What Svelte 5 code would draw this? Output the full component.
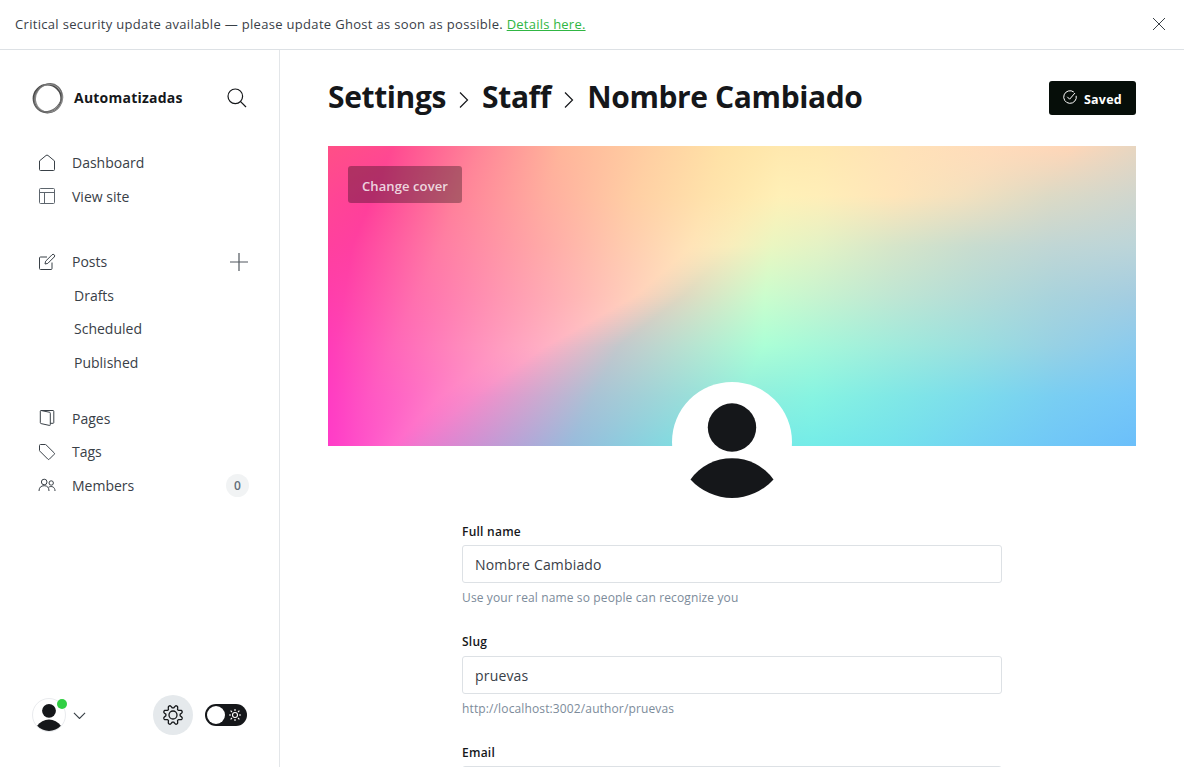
<script>
  // Colour field of the cover: each key line, 50px apart, lists [position %, colour] stops.
  const field = [
    [[0,'ff4f86'],[8,'ff4a90'],[19,'ff8698'],[29,'ffb69a'],[40,'ffcfa2'],[49,'ffe2a6'],[53,'ffe6aa'],[56,'ffe8ae'],[61,'ffe8b0'],[72,'ffe1b8'],[83,'ffdbbb'],[92,'ffd6b8'],[100,'e8d6c0']],
    [[0,'ff4694'],[5.5,'ff3f98'],[16,'ff8299'],[27,'ffae9f'],[38,'ffcfa4'],[47,'ffe2ab'],[52,'ffeab0'],[56,'fff0b7'],[61,'ffeeb8'],[70,'ffe5b9'],[78,'f4e1be'],[89,'dddac5'],[100,'d0d6ce']],
    [[0,'ff409e'],[3,'ff3fa1'],[14,'ff7da4'],[26,'ffa7a7'],[36,'ffc9ae'],[45,'ffe4b8'],[50,'f8eebc'],[55,'eaf6c1'],[61,'e3f2c5'],[70,'d6e5c9'],[80,'c8dccf'],[90,'c0d6d5'],[100,'bcd5d9']],
    [[0,'ff3dab'],[2,'ff41ab'],[11,'ff71ae'],[22,'ff99b2'],[31,'ffb8b6'],[38,'ffd1bb'],[44,'dfd9c1'],[54,'cbfdcd'],[60,'c8f4cf'],[70,'bfe6d3'],[80,'b4dcd7'],[90,'a9d3dc'],[100,'a4cde1']],
    [[0,'ff3cb8'],[1,'ff40b8'],[8,'ff66b9'],[16,'ff88bc'],[22,'ff9fc0'],[27,'ffb0c4'],[36,'c3c8cc'],[54,'abffd6'],[60,'a6f8d9'],[70,'a0ebdc'],[80,'9bdfdf'],[90,'97d1e4'],[100,'8bcbee']],
    [[0,'ff3cc2'],[1,'ff40c2'],[5,'ff56c3'],[10,'ff6bc5'],[14,'ff7fc7'],[18,'f78bca'],[33,'a9c3d5'],[51,'92eddc'],[60,'87f4e1'],[70,'80e8e6'],[80,'7cdcec'],[90,'79cef2'],[100,'76c7f8']],
    [[0,'ff3cc8'],[1,'ff40c8'],[3,'ff4bc9'],[5,'ff57ca'],[8,'ff68cc'],[11,'ee78ce'],[30,'98bbdc'],[46,'7be4e2'],[60,'74ece8'],[70,'73e2ec'],[80,'73d3f2'],[90,'70c7f7'],[100,'6bbffa']]
  ];
  const rgb = (h) => [0, 2, 4].map((i) => parseInt(h.slice(i, i + 2), 16));
  const mix = (a, b, t) => a + (b - a) * t;
  const STEP = 2;
  const bands = Array.from({ length: 300 / STEP }, (_, n) => {
    const y = n * STEP + STEP / 2;
    const k = Math.min(5, Math.floor(y / 50));
    const t = (y - k * 50) / 50;
    const stops = field[k].map(([pos, colour], i) => {
      const [nextPos, nextColour] = field[k + 1][i];
      const to = rgb(nextColour);
      const c = rgb(colour).map((v, j) => mix(v, to[j], t).toFixed(1));
      return `rgb(${c.join(' ')}) ${mix(pos, nextPos, t).toFixed(2)}%`;
    });
    return `linear-gradient(90deg, ${stops.join(', ')})`;
  });

  // Cog outline with eight teeth.
  const cog = 'M' + Array.from({ length: 120 }, (_, i) => {
    const a = (i * 3 * Math.PI) / 180;
    const wave = Math.max(-1, Math.min(1, -1.35 * Math.cos(8 * a)));
    const r = 8.4 + 1.3 * wave;
    return `${(12 + r * Math.cos(a)).toFixed(2)} ${(12 + r * Math.sin(a)).toFixed(2)}`;
  }).join('L') + 'Z';

  const fields = [
    { label: 'Full name', value: 'Nombre Cambiado', help: 'Use your real name so people can recognize you' },
    { label: 'Slug', value: 'pruevas', help: 'http://localhost:3002/author/pruevas' },
    { label: 'Email', value: '', help: '' }
  ];
</script>

{#snippet person()}
  <svg class="person" viewBox="0 0 112 112">
    <circle cx="56" cy="41.5" r="24.2" />
    <path d="M14.500 93.500A51 51 0 0 1 97.500 93.500A56 56 0 0 1 14.500 93.500Z" />
  </svg>
{/snippet}

{#snippet crumb()}
  <svg class="sep" viewBox="0 0 10 18"><path d="M1 1.500L8.500 9L1 16.500" /></svg>
{/snippet}

<div class="app">
  <div class="banner">
    <p>Critical security update available — please update Ghost as soon as possible. <a href="#details">Details here.</a></p>
    <svg class="close" viewBox="0 0 14 14"><path d="M1 1L13 13M13 1L1 13" /></svg>
  </div>
  <div class="body">
    <nav>
      <div class="head">
        <svg class="logo" viewBox="0 0 32 32">
          <circle cx="15.400" cy="16.600" r="13.900" stroke="#4a4a4a" stroke-width="1.800" />
          <ellipse cx="16.800" cy="15.600" rx="13.400" ry="14.200" stroke="#8a8a8a" stroke-width="1.500" transform="rotate(35 16 16)" />
          <ellipse cx="16.200" cy="15.700" rx="15" ry="12.700" stroke="#6a6a6a" stroke-width="1" transform="rotate(-48 16 16)" />
        </svg>
        <b>Automatizadas</b>
        <svg class="search" viewBox="0 0 20 20"><circle cx="8.300" cy="8.300" r="7.300" /><path d="M13.600 13.600L19 19" /></svg>
      </div>
      <ul>
        <li><svg class="ic" viewBox="0 0 18 18"><path d="M1.500 6.900L8 1.500a1.500 1.500 0 0 1 2 0L16.500 6.900V15.500a1 1 0 0 1-1 1H2.500a1 1 0 0 1-1-1Z" /></svg>Dashboard</li>
        <li><svg class="ic soft" viewBox="0 0 18 18"><rect x="1.500" y="1.500" width="15" height="15" rx="1" /><path d="M1.500 5.500H16.500M6.500 5.500V16.500" /></svg>View site</li>
      </ul>
      <ul class="posts">
        <li>
          <svg class="ic" viewBox="0 0 18 18"><path d="M9 4H2.500a1 1 0 0 0-1 1V15.500a1 1 0 0 0 1 1H13a1 1 0 0 0 1-1V9.500M7 11L7.600 8.200L14 1.800a1.500 1.500 0 0 1 2.200 2.200L9.800 10.400Z" /></svg>Posts
          <svg class="plus" viewBox="0 0 18 18"><path d="M9 0V18M0 9H18" /></svg>
        </li>
        <li class="sub">Drafts</li>
        <li class="sub">Scheduled</li>
        <li class="sub">Published</li>
      </ul>
      <ul class="rest">
        <li><svg class="ic" viewBox="0 0 18 18"><path d="M3 1.500H15a.8.8 0 0 1 .8.8V13.500a.8.8 0 0 1-.8.8H12.300M3 1.500L11.300 3.200a1 1 0 0 1 1 1V15.500a.8.8 0 0 1-1 .9L3.100 14.600a1 1 0 0 1-.8-1V2.200a.7.7 0 0 1 .7-.7" /></svg>Pages</li>
        <li><svg class="ic" viewBox="0 0 18 18"><path d="M1.500 2.500a1 1 0 0 1 1-1H7.300a1 1 0 0 1 .7.300L16.200 9.900a1 1 0 0 1 0 1.400L11.300 16.200a1 1 0 0 1-1.400 0L1.800 8.100a1 1 0 0 1-.3-.7Z" /></svg>Tags</li>
        <li><svg class="ic" viewBox="0 0 18 18"><circle cx="6.200" cy="6" r="2.800" /><circle cx="13.200" cy="7" r="2.200" /><path d="M1 15C1 11.500 3 9.700 6.200 9.700S11 11.500 11 15M10.600 11.200C13.500 9.600 17 10.800 17 15" /></svg>Members<i class="count">0</i></li>
      </ul>
      <footer>
        <div class="me">{@render person()}<i></i></div>
        <svg class="chev" viewBox="0 0 14 8"><path d="M1 1L7 7L13 1" /></svg>
        <div class="gear"><svg viewBox="0 0 24 24"><circle cx="12" cy="12" r="4" /><path d={cog} /></svg></div>
        <div class="toggle">
          <i></i>
          <svg viewBox="0 0 14 14"><circle cx="7" cy="7" r="2.500" /><path d="M7 1V3M7 11V13M1 7H3M11 7H13M2.600 2.600L4 4M10 10L11.400 11.400M2.600 11.400L4 10M10 4L11.400 2.600" /></svg>
        </div>
      </footer>
    </nav>
    <main>
      <header>
        <h1>Settings{@render crumb()}Staff{@render crumb()}Nombre Cambiado</h1>
        <button class="saved">
          <svg viewBox="0 0 14 14"><path d="M13.200 5.800A6.300 6.300 0 1 1 10.800 2M4.300 6.800L6.600 9.200L12 3" /></svg><span>Saved</span>
        </button>
      </header>
      <section class="cover">
        <div class="bands">{#each bands as bg}<div style:background={bg}></div>{/each}</div>
        <button class="change">Change cover</button>
        <div class="avatar">{@render person()}</div>
      </section>
      <form>
        {#each fields as f}
          <div class="field">
            <label for={f.label}>{f.label}</label>
            <input id={f.label} value={f.value} />
            <p>{f.help}</p>
          </div>
        {/each}
      </form>
    </main>
  </div>
</div>

<style>
  .app { height: 767px; overflow: hidden; background: #fff; font-family: "Open Sans", sans-serif; font-size: 14px; color: #394047; }
  svg { display: block; flex: none; fill: none; stroke: #394047; }
  p, h1, ul { margin: 0; padding: 0; list-style: none; }
  i { font-style: normal; }
  .banner { display: flex; justify-content: space-between; align-items: center; box-sizing: border-box; height: 50px; padding: 0 18px 1px 15px; border-bottom: 1px solid #dde1e5; font-size: 13px; letter-spacing: .315px; }
  .banner p { line-height: 20px; padding-bottom: 1px; }
  .banner a { color: #30b643; letter-spacing: .22px; text-underline-offset: 1px; }
  .close { width: 14px; }
  .body { display: flex; height: 717px; }

  nav { flex: none; width: 280px; box-sizing: border-box; border-right: 1px solid #e3e6e9; display: flex; flex-direction: column; padding: 32px 31px 32px 32px; }
  .head { display: flex; align-items: center; height: 32px; margin-bottom: 32px; }
  .logo { width: 32px; margin-left: -.5px; }
  .head b { margin-left: 10.500px; padding-bottom: 2px; font-size: 14px; letter-spacing: .22px; color: #15171a; }
  .search { width: 20px; margin: 0 1px 0 auto; stroke: #15171a; stroke-width: 1.200; }
  li { display: flex; height: 33.500px; align-items: center; padding-left: 6px; }
  .ic { width: 18px; margin-right: 16px; }
  .soft { stroke: #5d656d; }
  .plus { width: 18px; margin: 0 0 0 auto; stroke: #50575e; stroke-width: 1.200; }
  .sub { padding-left: 42px; }
  .posts { margin-top: 32px; }
  .rest { margin-top: 22.600px; }
  .count { margin: 0 -1px 0 auto; width: 23px; height: 23px; border-radius: 50%; background: #f1f3f4; color: #626d79; font-weight: 600; font-size: 12px; line-height: 23px; text-align: center; }
  footer { display: flex; align-items: center; height: 40px; margin-top: auto; }
  .me { position: relative; width: 32px; height: 32px; border: 1px solid #e9ebee; border-radius: 50%; }
  .person { width: 100%; height: 100%; fill: #15171a; stroke: none; }
  .me i { position: absolute; right: -2px; top: 0; width: 10px; height: 10px; border-radius: 50%; background: #30cf43; }
  .chev { width: 13px; margin-left: 7px; margin-top: 1px; stroke-width: 1.200; }
  .gear { display: flex; align-items: center; justify-content: center; width: 40px; height: 40px; margin-left: auto; border-radius: 50%; background: #e5e9ec; }
  .gear svg { width: 24px; stroke: #15171a; stroke-width: 1.300; }
  .toggle { display: flex; align-items: center; justify-content: space-between; box-sizing: border-box; width: 42px; height: 22px; margin: 0 1px 0 12px; padding: 0 5px 0 2px; border-radius: 11px; background: #15171a; }
  .toggle i { width: 18px; height: 18px; border-radius: 50%; background: #fff; }
  .toggle svg { width: 14px; stroke: #fff; stroke-width: 1.100; }

  main { flex: 1; padding: 0 48px; }
  header { display: flex; align-items: center; justify-content: space-between; height: 96px; }
  h1 { display: flex; align-items: center; height: 34px; font-size: 30px; letter-spacing: -.38px; color: #15171a; white-space: nowrap; padding-bottom: 3px; }
  .sep { width: 10px; margin: 6px 13.100px 0 13px; stroke-width: 1.200; stroke: #15171a; }
  button { border: 0; border-radius: 3px; font: 600 13px "Open Sans", sans-serif; color: #fff; letter-spacing: .1px; }
  .saved { display: flex; align-items: center; width: 87px; height: 34px; padding: 0 14px; background: #060e09; }
  .saved svg { width: 14px; margin: -2px 7.500px 0 -.5px; stroke: #fff; }
  .saved span { padding-top: 2px; letter-spacing: .22px; font-weight: 700; font-size: 12.500px; }
  .cover { position: relative; height: 300px; }
  .bands div { height: 2px; }
  .change { position: absolute; left: 20px; top: 20px; width: 114px; height: 37px; padding: 3px 0 0; background: rgb(0 0 0 / .31); color: rgb(255 255 255 / .8); }
  .avatar { position: absolute; left: 344px; top: 236px; box-sizing: border-box; width: 120px; height: 120px; padding: 4px; border-radius: 50%; background: #fff; }

  form { width: 540px; margin: 75.800px auto 0; }
  .field { height: 110.670px; }
  label { display: block; height: 20px; margin-bottom: 3.300px; line-height: 20px; font-size: 12px; font-weight: 600; letter-spacing: .25px; color: #15171a; }
  input { display: block; box-sizing: border-box; width: 540px; height: 38px; padding: 1px 12px 0; border: 1px solid #dde1e5; border-radius: 3px; background: #fff; font: 14px "Open Sans", sans-serif; letter-spacing: .17px; color: #394047; outline: 0; }
  .field p { margin-top: 5px; line-height: 20px; font-size: 12px; letter-spacing: .13px; color: #7c8b9a; }
</style>
